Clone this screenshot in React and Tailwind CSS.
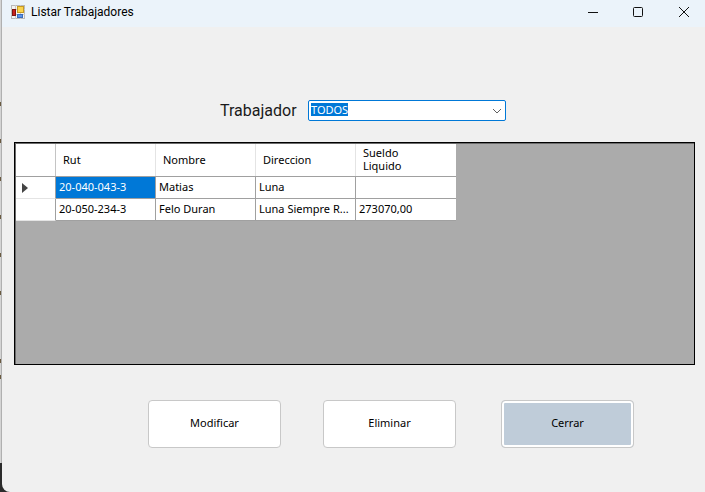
const font = "font-['Noto_Sans','Open_Sans',sans-serif]";

const columns = [
  { label: 'Rut', lines: ['Rut'] },
  { label: 'Nombre', lines: ['Nombre'] },
  { label: 'Direccion', lines: ['Direccion'] },
  { label: 'Sueldo Liquido', lines: ['Sueldo', 'Liquido'] },
];

const rows = [
  { current: true, cells: ['20-040-043-3', 'Matias', 'Luna', ''] },
  { current: false, cells: ['20-050-234-3', 'Felo Duran', 'Luna Siempre R...', '273070,00'] },
];

// restos de texto de la ventana de atras, cortados por el borde izquierdo
const marcas = ['mt-[102px]', 'mt-[33px]', 'mt-[34px]', 'mt-[34px]', 'mt-[34px]', 'mt-[34px]', 'mt-[64px]', 'mt-[12px]'];

const WindowIcon = () => (
  <svg width="14" height="14" viewBox="0 0 14 14" className="shrink-0">
    <rect x="0.5" y="0.5" width="13" height="13" fill="#f4f4f4" stroke="#b9b9b9" />
    <path d="M0 4.5h14M0 9.5h14M4.5 0v14M9.5 0v14" stroke="#c9c9c9" />
    <rect x="1.5" y="4.5" width="3" height="6" fill="#c8201a" stroke="#7d1510" />
    <rect x="6.5" y="1.5" width="6" height="6" fill="#fbd34d" stroke="#c69a22" />
    <rect x="6.5" y="9.5" width="5" height="3" fill="#5b93e6" stroke="#3b6cba" />
  </svg>
);

const Boton = ({ children, className = 'bg-white' }) => (
  <button className={`w-[133px] h-[48px] pb-[2px] rounded-[4px] border border-[#c8c8c8] text-[11px] text-black ${className}`}>
    {children}
  </button>
);

export default function App() {
  return (
    <div className={`w-[705px] h-[492px] flex overflow-hidden bg-[#2b2b2b] ${font}`}>
      <div className="w-[2px] h-[463px] shrink-0 flex flex-col items-start bg-[#b0b0b0] border-l border-[#d4d4d4]">
        {marcas.map((m, i) => (
          <span key={i} className={`w-[1px] h-[4px] -ml-[1px] bg-[#6a5a40] ${m}`} />
        ))}
      </div>
      <div className="flex-1 flex flex-col bg-[#f0f0f0] rounded-bl-[8px]">
        <div className="h-[27px] pb-[4px] flex items-center bg-[#ebf3fa]">
          <div className="ml-[9px] mr-[6px]">
            <WindowIcon />
          </div>
          <span className="text-[12px] text-black font-['Roboto',sans-serif]">Listar Trabajadores</span>
          <div className="ml-auto flex items-center text-black">
            <svg width="12" height="12" viewBox="0 0 12 12" className="mr-[33px]">
              <path d="M1 6.5h10" stroke="#111" />
            </svg>
            <svg width="12" height="12" viewBox="0 0 12 12" className="mr-[34px]">
              <rect x="1.5" y="1.5" width="9" height="9" rx="1" fill="none" stroke="#111" />
            </svg>
            <svg width="12" height="12" viewBox="0 0 12 12" className="mr-[15px]">
              <path d="M1 1l10 10M11 1L1 11" stroke="#111" />
            </svg>
          </div>
        </div>

        <div className="flex items-center mt-[73px] ml-[218px] h-[21px]">
          <span className="w-[88px] text-[16px] text-[#1a1a1a] font-['Roboto',sans-serif]">Trabajador</span>
          <div className="w-[198px] h-[21px] pb-[3px] flex items-center border border-[#0078d7] rounded-[2px] bg-white px-[2px]">
            <span className="bg-[#0078d7] text-white text-[11px] leading-[13px]">TODOS</span>
            <svg width="10" height="6" viewBox="0 0 10 6" className="ml-auto mr-[1px] mt-[3px]">
              <path d="M1 1l4 4 4-4" fill="none" stroke="#606060" />
            </svg>
          </div>
        </div>

        <div className="mt-[21px] ml-[12px] w-[681px] h-[223px] pt-[1px] pl-[1px] border border-black bg-[#ababab] shadow-[inset_1px_1px_0_#6b6b6b]">
          <div className="w-[440px] text-[11px] text-black bg-white">
            <div className="flex h-[33px] border-b border-[#a0a0a0]">
              <div className="w-[40px] border-r border-[#c4c4c4]" />
              {columns.map((col) => (
                <div key={col.label} className="w-[100px] flex flex-col justify-center pl-[7px] pb-[2px] leading-[13px] border-r border-[#e4e4e4] last:border-r-0">
                  {col.lines.map((line) => (
                    <span key={line}>{line}</span>
                  ))}
                </div>
              ))}
            </div>
            {rows.map((row) => (
              <div key={row.cells[0]} className="flex h-[22px]">
                <div className="w-[40px] flex items-center pl-[6px] border-r border-b border-r-[#a0a0a0] border-b-[#e4e4e4]">
                  {row.current && (
                    <svg width="6" height="10" viewBox="0 0 6 10">
                      <path d="M0 0l6 5-6 5z" fill="#444" />
                    </svg>
                  )}
                </div>
                {row.cells.map((cell, i) => (
                  <div
                    key={i}
                    className={`w-[100px] flex items-center pl-[3px] border-b border-[#a0a0a0] border-r last:border-r-0 ${
                      row.current && i === 0 ? 'bg-[#0078d7] text-white' : ''
                    }`}
                  >
                    {cell}
                  </div>
                ))}
              </div>
            ))}
          </div>
        </div>

        <div className="flex mt-[35px] ml-[146px]">
          <Boton>Modificar</Boton>
          <Boton className="ml-[42px] bg-white">Eliminar</Boton>
          <Boton className="ml-[45px] bg-[#bfccd9] shadow-[inset_0_0_0_2px_#ffffff]">Cerrar</Boton>
        </div>
      </div>
    </div>
  );
}
